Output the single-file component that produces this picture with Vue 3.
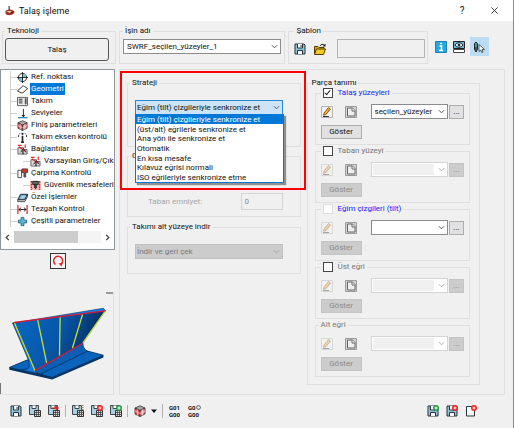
<template>
  <div class="dialog">
    <!-- Sprite of icons -->
    <svg class="sprite" width="0" height="0" aria-hidden="true">
      <symbol id="i-save" viewBox="0 0 12 12">
        <path d="M1 1h9l1 1v9H1z" fill="#8cc4dc" stroke="#2b3338" />
        <path d="M3.5 1v4h5V1" fill="#f4f8fa" stroke="#2b3338" />
        <path d="M3.5 11V7.5h5V11" fill="#f4f8fa" stroke="#2b3338" />
        <path d="M7 2v2" stroke="#2b3338" />
      </symbol>
      <symbol id="i-calc" viewBox="0 0 12 12">
        <path d="M.5.5h9v9h-9z" fill="#a9cfe0" stroke="#3c464c" />
        <path d="M3 .5v3h4v-3" fill="#fff" stroke="#3c464c" />
        <path d="M5.5 5.5h6v6h-6z" fill="#ddd" stroke="#333" />
        <path d="M5.5 7.5h6M5.5 9.5h6M7.5 6v5.5M9.5 6v5.5" stroke="#444" stroke-width=".8" />
      </symbol>
      <symbol id="i-open" viewBox="0 0 12 12">
        <path d="M.5 11V3.5H4l1 1h5V6" fill="#e0a800" stroke="#4d3b00" />
        <path d="M.5 11.5 2.5 6h9l-2 5.500z" fill="#ffca28" stroke="#4d3b00" />
        <path d="M6 3c1-2 3-2 4-1" fill="none" stroke="#222" />
        <path d="M8.500 3.500h3v-3z" fill="#222" />
      </symbol>
      <symbol id="i-info" viewBox="0 0 12 12">
        <path d="M.5.5h11v11H.5z" fill="#29a9df" stroke="#1784b5" />
        <path d="M5 2.500h2M4.500 5h2v4.500M4 9.500h4" fill="none" stroke="#fff" stroke-width="1.500" />
      </symbol>
      <symbol id="i-preview" viewBox="0 0 12 12">
        <path d="M.5.5h11v7H.5z" fill="#62bde0" stroke="#222" />
        <path d="M2 4c2-3 6-3 8 0-2 3-6 3-8 0z" fill="#dff3fb" stroke="#222" />
        <circle cx="6" cy="4" r="1.300" fill="#222" />
        <path d="M.5 8.500h11v3H.5z" fill="#fff" stroke="#444" />
      </symbol>
      <symbol id="i-pick" viewBox="0 0 12 12">
        <path d="M1.500 2.500Q3 0 4.500 2.500V8L3 11 1.500 8z" fill="#3d5c68" stroke="#222" />
        <path d="M3 2v4" stroke="#5fd0e0" />
        <path d="m6 3.500 5.500 5H9l1 2.500-1.200.500-1-2.500L6 10.500z" fill="#fff" stroke="#333" stroke-width=".8" />
      </symbol>
      <symbol id="i-ref" viewBox="0 0 12 12">
        <circle cx="6" cy="6" r="4.500" fill="#fff" stroke="#222" />
        <path d="M6 6V2a4 4 0 0 1 4 4zM6 6v4a4 4 0 0 1-4-4z" fill="#7cc4dd" />
        <path d="M6 0v12M0 6h12" stroke="#222" />
      </symbol>
      <symbol id="i-geo" viewBox="0 0 12 12">
        <path d="M.5 7.500 6 2.500q1-.8 2 0L11.500 5 6.500 9.500q-1 .8-2 0z" fill="#fff" stroke="#222" />
      </symbol>
      <symbol id="i-tool" viewBox="0 0 12 12">
        <path d="M.5 1.500h11v9H.5z" fill="#eee" stroke="#555" />
        <path d="M2 3.500h4M2 5.500h4M2 7.500h4" stroke="#222" />
        <path d="M8.500 2.500h2v6l-1 1-1-1z" fill="#555" />
      </symbol>
      <symbol id="i-level" viewBox="0 0 12 12">
        <path d="M7 1v9" stroke="#222" />
        <path d="M5 7.500h4l-2 2.500z" fill="#222" />
        <path d="M1 10.500h10.500" stroke="#2890c8" stroke-width="1.500" />
      </symbol>
      <symbol id="i-cube" viewBox="0 0 12 12">
        <path d="m6 .8 5 2.200-5 2.500L1 3z" fill="#aaa" stroke="#333" stroke-width=".8" />
        <path d="M1 3v6l5 2.500v-6z" fill="#f05050" stroke="#333" stroke-width=".8" />
        <path d="M11 3v6l-5 2.500v-6z" fill="#f48080" stroke="#333" stroke-width=".8" />
        <path d="m1 6 5 2.500L11 6M3.500 4.500v6M8.500 4.500v6" fill="none" stroke="#fff" stroke-width=".6" />
      </symbol>
      <symbol id="i-axis" viewBox="0 0 12 12">
        <path d="M6 4v7M4.500 11h3" stroke="#222" stroke-width="1.800" />
        <circle cx="6" cy="2" r="1.200" fill="#222" />
        <path d="M1.500 5.500q0-3 2-4M10.500 5.500q0-3-2-4" fill="none" stroke="#222" stroke-dasharray="2 1" />
      </symbol>
      <symbol id="i-link" viewBox="0 0 12 12">
        <path d="M1 4h6v7H1zM6 6h5v5H6z" fill="#d5d5d5" stroke="#444" stroke-width=".8" />
        <path d="M1 1.500h4M2 3l7 5M9 .500v4" stroke="#e02828" stroke-width="1.300" />
        <path d="m4 9 3-4 3 4" fill="none" stroke="#222" />
      </symbol>
      <symbol id="i-clash" viewBox="0 0 12 12">
        <path d="M1 2.500h4v8H1z" fill="#fff" stroke="#444" />
        <path d="M5.500 1h6v4h-6z" fill="#d33" stroke="#422" stroke-width=".8" />
        <path d="M7 5h3v4l-1.500 2L7 9z" fill="#555" />
      </symbol>
      <symbol id="i-safe" viewBox="0 0 12 12">
        <path d="M.5 1h11v10H.5z" fill="#f7b0b0" />
        <path d="M1.500 1v10M10.500 1v10" stroke="#e02020" stroke-width="1.500" stroke-dasharray="2 1" />
        <path d="M3 1.500h6v3.500H3z" fill="#666" stroke="#222" />
        <path d="M4.500 5h3v3L6 10 4.500 8z" fill="#333" />
      </symbol>
      <symbol id="i-special" viewBox="0 0 12 12">
        <path d="m.8 8.500 3-6h7.700l-3 6z" fill="#3f9cc8" stroke="#222" />
        <path d="m.8 8.500v2h7.700l3-5.500V2.500l-3 6z" fill="#ddd" stroke="#222" stroke-width=".8" />
        <path d="M4.500 4.500h5M3.500 6.500h5" stroke="#fff" />
      </symbol>
      <symbol id="i-machine" viewBox="0 0 12 12">
        <path d="M1 1v10M11 1v10" stroke="#e02020" stroke-width="1.300" />
        <path d="M2 6h8M4.500 4 2 6l2.500 2M7.500 4 10 6 7.500 8" fill="none" stroke="#222" />
      </symbol>
      <symbol id="i-plus" viewBox="0 0 12 12">
        <path d="M4.500 1.500h3v3h3v3h-3v3h-3v-3h-3v-3h3z" fill="#58b8de" stroke="#28687f" />
      </symbol>
      <symbol id="i-pencil" viewBox="0 0 12 12">
        <path d="M.5.5h11v11H.5z" fill="#f4f4f4" stroke="#b4b4b4" />
        <path d="m3 7 4.500-5.500 2 1.500L5 8.500l-2.500.800z" fill="#f2a531" stroke="#5a3a08" stroke-width=".7" />
        <path d="M2 10.500h6" stroke="#333" />
      </symbol>
      <symbol id="i-page" viewBox="0 0 12 12">
        <path d="M.5.5h11v11H.5z" fill="#d4d4d4" stroke="#9c9c9c" />
        <path d="M2.500 2h5l2.500 2.500V10h-7.500z" fill="#eee" stroke="#666" />
        <path d="M7 2v3h3" fill="#fff" stroke="#666" />
      </symbol>
      <symbol id="i-blank" viewBox="0 0 12 12">
        <path d="M1.500 1.500h8v9.500h-8z" fill="#f7f7f7" stroke="#333" />
      </symbol>
      <symbol id="i-chevron" viewBox="0 0 8 8">
        <path d="m1 2.500 3 3 3-3" fill="none" stroke="currentColor" />
      </symbol>
    </svg>

    <header class="titlebar">
      <svg class="app-icon" viewBox="0 0 12 12" aria-hidden="true">
        <path d="M.5 6q3-3 9-1l2 2q-1 4-6 4T.5 8z" fill="#a3342a" />
        <path d="M2 6.500q3-1.500 6 0l-2 2z" fill="#e8d3b0" />
        <path d="M5 0v6" stroke="#444" stroke-width="1.500" />
        <path d="m6 9 4-2" stroke="#3a1410" />
      </svg>
      <h1>Talaş işleme</h1>
      <button class="win-btn help" type="button" aria-label="Yardım">?</button>
      <button class="win-btn" type="button" aria-label="Kapat">
        <svg viewBox="0 0 8 8"><path d="m.5.5 7 7M7.500.5l-7 7" stroke="#222" /></svg>
      </button>
    </header>

    <div class="top">
      <fieldset class="tech">
        <legend>Teknoloji</legend>
        <button type="button" class="tech-btn">Talaş</button>
      </fieldset>
      <fieldset class="job">
        <legend>İşin adı</legend>
        <div class="combo">
          <select v-model="jobName" aria-label="İşin adı">
            <option>SWRF_seçilen_yüzeyler_1</option>
          </select>
          <svg class="chevron"><use href="#i-chevron" /></svg>
        </div>
      </fieldset>
      <fieldset class="template">
        <legend>Şablon</legend>
        <div class="template-row">
          <button type="button" class="icon-btn" aria-label="Kaydet"><svg><use href="#i-save" /></svg></button>
          <button type="button" class="icon-btn" aria-label="Aç"><svg><use href="#i-open" /></svg></button>
          <input type="text" aria-label="Şablon" readonly />
        </div>
      </fieldset>
      <div class="view-tools">
        <button type="button" class="icon-btn" aria-label="Bilgi"><svg><use href="#i-info" /></svg></button>
        <button type="button" class="icon-btn" aria-label="Önizleme"><svg><use href="#i-preview" /></svg></button>
        <button type="button" class="icon-btn active" aria-label="Seç"><svg><use href="#i-pick" /></svg></button>
      </div>
    </div>

    <main class="content">
      <aside class="side">
        <nav class="tree">
          <ul>
            <li
              v-for="node in nodes"
              :key="node.text"
              :class="{ child: node.child, selected: node.text === selectedNode }"
              @click="selectedNode = node.text"
            >
              <svg class="node-icon"><use :href="'#i-' + node.icon" /></svg>
              <span>{{ node.text }}</span>
            </li>
          </ul>
          <div class="scrollbar">
            <svg viewBox="0 0 8 8"><path d="M5.500 1 2.500 4l3 3" fill="none" stroke="#444" stroke-width="1.500" /></svg>
            <div class="track"><div class="thumb"></div></div>
            <svg viewBox="0 0 8 8"><path d="m2.500 1 3 3-3 3" fill="none" stroke="#444" stroke-width="1.500" /></svg>
          </div>
        </nav>
        <button type="button" class="rotate-btn" aria-label="Döndür">
          <svg viewBox="0 0 12 12">
            <path d="M3.500 9.500A4.500 4.500 0 1 1 9 9.300" fill="none" stroke="#e02828" stroke-width="1.500" />
            <path d="M6.500 8.500 11 7.500 9.500 11.500z" fill="#e02828" />
          </svg>
        </button>
        <div class="preview">
          <!-- Part with tilt lines -->
          <svg viewBox="20 110 306 231" role="img" aria-label="Eğim çizgileri">
            <defs>
              <linearGradient id="blade" x1="0" y1="0" x2="1" y2="0.300">
                <stop offset="0" stop-color="#0868c4" />
                <stop offset="0.550" stop-color="#0757a8" />
                <stop offset="1" stop-color="#052a58" />
              </linearGradient>
            </defs>
            <path d="M27 296 80 274 258 245 312 259V266L157 333 27 303z" fill="#043468" />
            <path d="M27 296 80 274 258 245 312 259 157 326z" fill="#0a64bb" stroke="#062a50" stroke-width="2" />
            <path d="M37 162 80 262Q94 292 82 301L62 304 128 318 105 306 42 160z" fill="#1479d6" stroke="#06284c" stroke-width="2" />
            <path d="M105 306 250 222Q250 240 264 247L122 316Q112 318 105 306z" fill="#0a5eb3" stroke="#052750" stroke-width="2" />
            <path d="M37 162 312 117 319 125 42 163z" fill="#1b7ee0" stroke="#073a74" stroke-width="2" />
            <path d="M42 161 318 125 250 223 105 306z" fill="url(#blade)" />
            <path d="M42 160 105 306M113 152 140 282M181 143 179 260M249 135 218 238M318 125 250 222" fill="none" stroke="#c6dc3c" stroke-width="4" />
            <path d="M42 160 318 125M105 306 250 223" stroke="#d01c3c" stroke-width="4" />
          </svg>
        </div>
      </aside>

      <section class="panel">
        <div class="column">
          <fieldset class="strategy">
            <legend>Strateji</legend>
            <div class="combo open">
              <select v-model="strategy" aria-label="Strateji">
                <option v-for="s in strategies" :key="s">{{ s }}</option>
              </select>
              <svg class="chevron"><use href="#i-chevron" /></svg>
              <ul class="popup" role="listbox">
                <li
                  v-for="s in strategies"
                  :key="s"
                  role="option"
                  :aria-selected="s === strategy"
                  :class="{ selected: s === strategy }"
                  @click="strategy = s"
                >{{ s }}</li>
              </ul>
            </div>
          </fieldset>
          <fieldset class="safety">
            <legend>G</legend>
            <div class="safety-row">
              <label for="floor">Taban emniyet:</label>
              <input id="floor" type="text" value="0" disabled />
            </div>
          </fieldset>
          <fieldset class="lower">
            <legend>Takımı alt yüzeye indir</legend>
            <div class="combo filled">
              <select disabled aria-label="Takımı alt yüzeye indir">
                <option>İndir ve geri çek</option>
              </select>
              <svg class="chevron"><use href="#i-chevron" /></svg>
            </div>
          </fieldset>
          <div class="highlight"></div>
        </div>

        <fieldset class="part">
          <legend>Parça tanımı</legend>
          <fieldset v-for="g in groups" :key="g.title" class="geometry">
            <legend :class="{ blue: g.blue, plain: !g.check }">
              <label v-if="g.check">
                <input v-model="g.checked" type="checkbox" :disabled="g.check === 'locked'" />{{ g.title }}
              </label>
              <template v-else>{{ g.title }}</template>
            </legend>
            <div class="geometry-row">
              <button type="button" class="icon-btn pencil" :disabled="!g.enabled" aria-label="Düzenle">
                <svg><use href="#i-pencil" /></svg>
              </button>
              <button type="button" class="icon-btn" aria-label="Yeni"><svg><use href="#i-page" /></svg></button>
              <div class="combo" :class="{ disabled: !g.selectable }">
                <select :disabled="!g.selectable" :aria-label="g.title">
                  <option>{{ g.value }}</option>
                </select>
                <svg class="chevron"><use href="#i-chevron" /></svg>
              </div>
              <button type="button" class="flat-btn more" :disabled="!g.selectable">...</button>
            </div>
            <button type="button" class="flat-btn show" :disabled="!g.enabled">Göster</button>
          </fieldset>
        </fieldset>
      </section>
    </main>

    <footer class="toolbar">
      <button v-for="b in saveButtons" :key="b.name" type="button" class="icon-btn" :class="{ split: b.split }" :aria-label="b.name">
        <svg viewBox="0 0 12 12">
          <use :href="'#i-' + b.icon" />
          <path v-if="b.mark === 'arrow'" d="M4 3h5M8 1.500 10.500 3 8 4.500z" fill="#e02020" stroke="#e02020" />
          <path v-if="b.mark === 'list'" d="M10.500 0v5" stroke="#a58b3a" stroke-width="2" stroke-dasharray="1 1" />
          <template v-if="b.mark === 'red' || b.mark === 'green'">
            <circle cx="9" cy="3" r="3" :fill="b.mark === 'red' ? '#ee2222' : '#2a9a48'" />
            <path d="M7.500 3h3M9 1.500v3" stroke="#fff" />
          </template>
        </svg>
      </button>
      <button type="button" class="icon-btn split" aria-label="Simülasyon"><svg><use href="#i-cube" /></svg></button>
      <button type="button" class="arrow-btn" aria-label="Simülasyon seçenekleri">
        <svg viewBox="0 0 6 6"><path d="M0 1.500h6L3 5z" fill="#111" /></svg>
      </button>
      <button type="button" class="gcode split"><span>G01</span><span>G00</span></button>
      <button type="button" class="gcode">
        <span>G0<svg viewBox="0 0 6 6"><circle cx="3" cy="3" r="2.300" fill="#e4f3e6" stroke="#444" /></svg></span><span>G00</span>
      </button>
      <span class="spacer"></span>
      <button v-for="b in endButtons" :key="b.name" type="button" class="icon-btn" :aria-label="b.name">
        <svg viewBox="0 0 12 12">
          <use :href="'#i-' + b.icon" />
          <circle cx="9" cy="3" r="3" :fill="b.mark === 'red' ? '#ee2222' : '#2a9a48'" />
          <path d="M7.500 3h3M9 1.500v3" stroke="#fff" />
        </svg>
      </button>
    </footer>
  </div>
</template>

<script setup>
import { ref } from 'vue'

const jobName = ref('SWRF_seçilen_yüzeyler_1')
const selectedNode = ref('Geometri')

const nodes = [
  { text: 'Ref. noktası', icon: 'ref' },
  { text: 'Geometri', icon: 'geo' },
  { text: 'Takım', icon: 'tool' },
  { text: 'Seviyeler', icon: 'level' },
  { text: 'Finiş parametreleri', icon: 'cube' },
  { text: 'Takım eksen kontrolü', icon: 'axis' },
  { text: 'Bağlantılar', icon: 'link' },
  { text: 'Varsayılan Giriş/Çıkış', icon: 'link', child: true },
  { text: 'Çarpma Kontrolü', icon: 'clash' },
  { text: 'Güvenlik mesafeleri', icon: 'safe', child: true },
  { text: 'Özel İşlemler', icon: 'special' },
  { text: 'Tezgah Kontrol', icon: 'machine' },
  { text: 'Çeşitli parametreler', icon: 'plus' }
]

const strategies = [
  'Eğim (tilt) çizgileriyle senkronize et',
  '(üst/alt) eğrilerle senkronize et',
  'Ana yön ile senkronize et',
  'Otomatik',
  'En kısa mesafe',
  'Kılavuz eğrisi normali',
  'ISO eğrileriyle senkronize etme'
]
const strategy = ref(strategies[0])

const groups = ref([
  { title: 'Talaş yüzeyleri', check: 'free', checked: true, blue: true, enabled: true, selectable: true, value: 'seçilen_yüzeyler' },
  { title: 'Taban yüzeyi', check: 'free', checked: false, enabled: false, selectable: false, value: '' },
  { title: 'Eğim çizgileri (tilt)', check: 'locked', checked: false, blue: true, enabled: false, selectable: true, value: '' },
  { title: 'Üst eğri', check: 'free', checked: false, enabled: false, selectable: false, value: '' },
  { title: 'Alt eğri', check: '', checked: false, enabled: false, selectable: false, value: '' }
])

const saveButtons = [
  { name: 'Kaydet', icon: 'save' },
  { name: 'Kaydet ve hesapla', icon: 'calc' },
  { name: 'Kaydet ve çık', icon: 'calc', mark: 'arrow' },
  { name: 'Liste', icon: 'calc', mark: 'list', split: true },
  { name: 'Kopyala', icon: 'calc', mark: 'red' },
  { name: 'Ekle', icon: 'calc', mark: 'green' }
]

const endButtons = [
  { name: 'Kaydet ve kopyala', icon: 'save', mark: 'green' },
  { name: 'Kaydet ve kapat', icon: 'save', mark: 'red' },
  { name: 'Çıkış', icon: 'blank', mark: 'red' }
]
</script>

<style>
body {
  background: #f0f0f0;
}
</style>

<style scoped>
.dialog {
  min-height: 100vh;
  box-sizing: border-box;
  border-right: 1px solid #8a8a8a;
  background: #f0f0f0;
  color: #111;
  font: 8px/12px Roboto, "Liberation Sans", sans-serif;
}

.dialog *,
.dialog *::before,
.dialog *::after {
  box-sizing: border-box;
}

.sprite {
  position: absolute;
}

button,
input,
select {
  margin: 0;
  padding: 0;
  font: inherit;
  color: inherit;
  border-radius: 0;
}

ul {
  margin: 0;
  padding: 0;
  list-style: none;
}

svg {
  display: block;
}

fieldset {
  min-width: 0;
  margin: 0;
  padding: 0;
  border: 1px solid #dfdfdf;
}

legend {
  padding: 0 2px;
}

/* Title bar */
.titlebar {
  display: flex;
  align-items: center;
  height: 21px;
  padding: 0 12px 0 5px;
  background: #fff;
}

.app-icon {
  width: 10px;
  height: 12px;
}

h1 {
  flex: 1;
  margin: 0 0 0 4px;
  font-size: 9px;
  font-weight: 400;
}

.win-btn {
  width: 10px;
  margin-left: 24px;
  border: none;
  background: none;
}

.win-btn svg {
  width: 7px;
  height: 7px;
}

.help {
  font-size: 10px;
}

/* Icon buttons */
.icon-btn {
  width: 12px;
  height: 12px;
  flex-shrink: 0;
  border: none;
  background: none;
}

.icon-btn svg {
  width: 12px;
  height: 12px;
}

/* Combo box */
.combo {
  position: relative;
  height: 15px;
}

.combo select {
  display: block;
  width: 100%;
  height: 100%;
  padding: 0 3px;
  appearance: none;
  border: 1px solid #8c8c8c;
  background: #fff;
  opacity: 1;
}

.chevron {
  position: absolute;
  top: 4px;
  right: 3px;
  width: 7px;
  height: 7px;
  color: #444;
  pointer-events: none;
}

.combo.open select {
  border-color: #2a86cf;
  background: #cce4f7;
  padding: 0 1px;
}

.combo.filled select {
  border-color: #bfbfbf;
  background: #ccc;
  color: #7a7a7a;
  padding: 0 1px;
}

.combo.filled .chevron,
.combo.disabled .chevron {
  color: #a0a0a0;
}

.combo.disabled select {
  border: 1px solid #d4d4d4;
  background: #f0f0f0;
  box-shadow: inset 0 0 0 1px #fff, inset -13px 0 0 #fff;
}

/* Top row */
.top {
  display: grid;
  grid-template-columns: 114px 166fr 139fr 82fr;
  gap: 3px;
  padding: 4px 0 0 2px;
}

.tech {
  padding: 1px 6px 2px 2px;
}

.tech-btn {
  display: block;
  width: 100%;
  height: 23px;
  border: 1px solid #555;
  border-radius: 3px;
  background: #f0f0f0;
}

.job {
  padding: 2px 3px 0;
}

.template {
  padding: 2px 2px 0 5px;
}

.template-row {
  display: flex;
  align-items: center;
}

.template-row .icon-btn {
  margin-right: 8px;
}

.template-row input {
  flex: 1;
  min-width: 0;
  height: 19px;
  margin-left: 3px;
  border: 1px solid #b4b4b4;
  background: #f0f0f0;
}

.view-tools {
  display: flex;
  align-items: center;
  align-self: end;
  gap: 3px;
  height: 19px;
  margin: 0 0 8px 3px;
}

.view-tools .icon-btn {
  display: flex;
  align-items: center;
  justify-content: center;
  width: 15px;
  height: 19px;
}

.view-tools .active {
  width: 19px;
  background: #bcdcf4;
}

/* Body */
.content {
  display: grid;
  grid-template-columns: 115px 1fr;
  gap: 4px;
  padding: 5px 8px 0 0;
}

.side {
  display: flex;
  flex-direction: column;
  align-items: center;
  min-width: 0;
}

.tree {
  width: 100%;
  height: 181px;
  display: flex;
  flex-direction: column;
  overflow: hidden;
  padding-top: 1px;
  border: 1px solid #8f969c;
  background: #fff;
}

.tree ul {
  display: flex;
  flex-direction: column;
  justify-content: space-between;
  height: 154px;
  margin-left: 9px;
}

.tree li {
  display: flex;
  align-items: center;
  height: 12px;
  white-space: nowrap;
  border-left: 1px solid #d0d0d0;
}

.tree li::before {
  content: "";
  width: 6px;
  flex-shrink: 0;
  border-top: 1px solid #d0d0d0;
}

.tree li.child::before {
  margin-left: 12px;
  width: 7px;
}

.node-icon {
  width: 11px;
  height: 11px;
  flex-shrink: 0;
  margin-right: 2px;
}

.tree span {
  padding: 0 1px;
}

.tree .selected span {
  background: #0078d7;
  color: #fff;
}

.scrollbar {
  display: flex;
  align-items: center;
  height: 12px;
  margin: 6px 3px 0;
}

.scrollbar svg {
  width: 7px;
  height: 7px;
}

.track {
  flex: 1;
  height: 12px;
  margin: 0 3px;
  background: #f4f4f4;
}

.thumb {
  width: 74%;
  height: 100%;
  background: #cdcdcd;
}

.rotate-btn {
  width: 16px;
  height: 16px;
  margin-top: 3px;
  border: 1px solid #333;
  background: #f4f4f4;
}

.rotate-btn svg {
  width: 12px;
  height: 12px;
  margin: 0 auto;
}

.preview {
  align-self: stretch;
  flex: 1;
  display: flex;
  align-items: flex-end;
  margin: 23px 1px 0 0;
  padding: 0 5px 12px 0;
  border: 1px solid #e2e2e2;
  border-left: none;
  border-top: none;
}

.preview::before {
  content: "";
  align-self: flex-start;
  order: 2;
  width: 7px;
  height: 2px;
  margin: 0 -5px 0 -2px;
  background: #999;
}

.preview::after {
  content: "";
  order: -1;
  width: 1px;
  height: 11px;
  margin: 0 6px -12px 0;
  background: #777;
}

.preview svg {
  flex: 1;
  min-width: 0;
}

/* Parameter panel */
.panel {
  display: grid;
  grid-template-columns: 1fr 1fr;
  gap: 6px;
  padding: 7px 24px 9px 7px;
  border: 1px solid #e0e0e0;
}

.column {
  position: relative;
}

.column fieldset {
  padding: 0 17px 0 7px;
}

.column legend {
  margin-left: -5px;
}

.column .strategy {
  padding-top: 11px;
  padding-bottom: 31px;
}

.popup {
  position: absolute;
  z-index: 1;
  top: 14px;
  left: 0;
  right: -1px;
  height: 69px;
  display: flex;
  flex-direction: column;
  justify-content: space-between;
  border: 1px solid #0078d7;
  background: #fff;
  box-shadow: 2px 2px 1px #8f8f8f;
}

.popup li {
  height: 9px;
  padding: 0 1px;
  line-height: 9px;
  white-space: nowrap;
}

.popup .selected {
  background: #0078d7;
  color: #fff;
}

.safety {
  margin-top: 3px;
}

.safety-row {
  display: flex;
  align-items: center;
  justify-content: space-between;
  padding: 31px 0 6px 13px;
  color: #a6a6a6;
}

.safety-row input {
  width: 42px;
  height: 17px;
  padding: 0 3px;
  border: 1px solid #d4d4d4;
  background: #f0f0f0;
  color: #888;
}

.column .lower {
  margin-top: 4px;
  padding-top: 11px;
  padding-bottom: 14px;
}

.highlight {
  position: absolute;
  top: -6px;
  left: -7px;
  right: -5px;
  height: 119px;
  border: 2px solid #f00;
  pointer-events: none;
}

.part {
  margin-top: 2px;
  padding: 0 9px 7px 7px;
}

.part > legend {
  margin-left: -5px;
  line-height: 8px;
}

.geometry {
  padding: 5px;
}

.geometry legend {
  margin-left: 0;
  color: #777;
}

.geometry legend.plain {
  margin-left: -2px;
}

.geometry legend.blue {
  color: #1a1aff;
}

.geometry label {
  display: flex;
  align-items: center;
}

.geometry input {
  width: 10px;
  height: 10px;
  margin-right: 5px;
  appearance: none;
  border: 1px solid #444;
  background: #fff;
}

.geometry input:disabled {
  border-color: #ddd;
}

.geometry input:checked::before {
  content: "";
  display: block;
  width: 3px;
  height: 6px;
  margin: 0 auto;
  border: solid #222;
  border-width: 0 1px 1px 0;
  transform: rotate(40deg);
}

.geometry-row {
  display: flex;
  align-items: center;
  height: 15px;
  margin-bottom: 6px;
}

.geometry-row .icon-btn {
  margin-right: 12px;
}

.pencil:disabled {
  opacity: 0.4;
}

.geometry-row .combo {
  flex: 1;
  margin-left: 2px;
}

.flat-btn {
  display: block;
  border: 1px solid #adadad;
  background: #e1e1e1;
}

.flat-btn:disabled {
  border-color: #c4c4c4;
  background: #ccc;
  color: #8a8a8a;
}

.more {
  width: 15px;
  height: 14px;
  margin-left: 1px;
  line-height: 9px;
}

.show {
  width: 41px;
  height: 14px;
  line-height: 10px;
}

/* Bottom toolbar */
.toolbar {
  display: flex;
  align-items: center;
  gap: 7px;
  height: 31px;
  padding: 0 36px 0 10px;
}

.toolbar .split {
  box-sizing: content-box;
  margin-left: -2px;
  padding-left: 6px;
  border-left: 1px solid #b0b0b0;
}

.arrow-btn {
  width: 6px;
  margin-left: -2px;
  border: none;
  background: none;
}

.arrow-btn svg {
  width: 6px;
  height: 6px;
}

.gcode {
  width: 12px;
  border: none;
  background: none;
  font-size: 6px;
  font-weight: 700;
  line-height: 7px;
  text-align: left;
}

.gcode span {
  display: flex;
  align-items: center;
  height: 7px;
}

.gcode svg {
  width: 5px;
  height: 5px;
  flex-shrink: 0;
}

.spacer {
  flex: 1;
}
</style>
